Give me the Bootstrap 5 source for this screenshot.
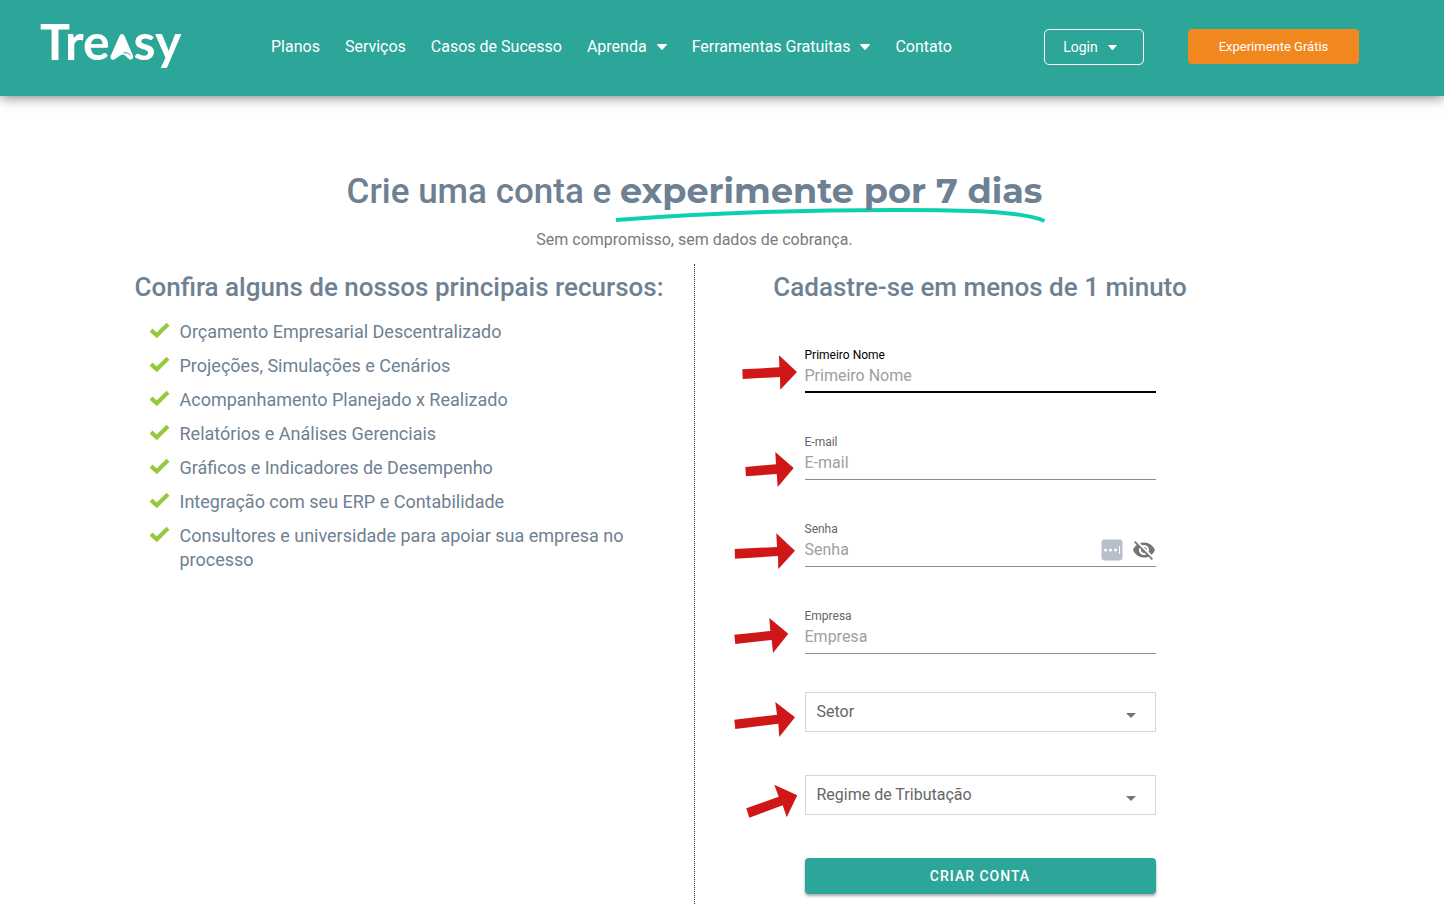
<!DOCTYPE html>
<html lang="pt-BR">
<head>
<meta charset="utf-8">
<meta name="viewport" content="width=device-width, initial-scale=1">
<title>Treasy - Crie uma conta</title>
<link href="https://cdn.jsdelivr.net/npm/bootstrap@5.3.0/dist/css/bootstrap.min.css" rel="stylesheet">
<style>
  :root { --teal: #2ca699; --slate: #6e8192; }
  body { font-family: Roboto, "Liberation Sans", sans-serif; color: #7a7a7a; background: #fff; }

  .site-header { min-height: 96px; padding: 0 85px 2px 40px; background: var(--teal); box-shadow: 0 1px 12px rgba(0, 0, 0, .55); }
  .brand { width: 139px; padding-bottom: 12px; font: 700 50px/60px Lato, "Liberation Sans", sans-serif; color: #fff; text-decoration: none; }
  .brand svg { width: 24px; height: 26px; }
  .main-menu { gap: 25px; margin-left: 92px; }
  .main-menu .nav-link { color: #fff; line-height: 24px; padding: 0; }
  .arrow-down { width: 10px; height: 6px; margin-left: 10px; fill: currentColor; vertical-align: 2px; }
  .header-actions { gap: 44px; }
  .btn-login { width: 100px; height: 36px; font-size: 14px; line-height: 20px; color: #fff; border: 1px solid #fff; border-radius: 5px; padding: 0 8px 0 0; }
  .btn-login .arrow-down { width: 9px; height: 5px; }
  .btn-trial { width: 171px; height: 35px; font-size: 13px; line-height: 20px; color: #fff; background: #f1881f; border: 0; border-radius: 4px; padding: 0; }
  .btn-login:hover, .btn-trial:hover { color: #fff; background: #e07a12; }

  main { padding: 74px 55px 0 0; }
  .page-title { font-size: 35px; line-height: 44px; font-weight: 500; color: var(--slate); }
  .highlighted { font-family: Montserrat, Inter, sans-serif; font-weight: 700; line-height: 36px; }
  .highlighted svg { left: -4px; bottom: -15px; width: calc(100% + 8px); height: 16px; z-index: -1; }
  .subtitle { margin-top: 14px; margin-bottom: 12px; line-height: 24px; }

  .signup-columns { max-width: 1140px; }
  .col-features { border-right: 1px dotted #333; padding: 7px 10px 10px; }
  .col-form { padding: 7px 9px 10px 10px; }
  h2 { font-size: 26px; line-height: 32px; font-weight: 500; color: var(--slate); }
  .features { gap: 10px; margin-top: 17px; padding: 0 40px 0 14px; font-size: 18px; line-height: 24px; color: var(--slate); }
  .features svg { width: 21px; height: 16px; margin: 2px 10px 0 0; }

  .signup-form { max-width: 351px; margin-top: 44px; }
  .text-fields { gap: 41px; }
  .choices { gap: 43px; margin-top: 38px; }
  .field label { font-size: 12px; line-height: 16px; color: #666; }
  .field input { display: block; width: 100%; height: 30px; padding: 0 0 5px; border: 0; border-bottom: 1px solid #8c8c8c; border-radius: 0; outline: 0; background: transparent; font-size: 16px; line-height: 24px; color: #222; }
  .field input::placeholder { color: #a0a0a0; opacity: 1; }
  .field.active label { color: #000; }
  .field.active input { border-bottom: 2px solid #000; padding-bottom: 4px; }
  .field-tools { right: 0; bottom: 5px; gap: 9px; }
  .field-tools button { padding: 0; border: 0; background: none; line-height: 0; }
  .pointer { right: 100%; top: 0; width: 80px; height: 46px; overflow: visible; fill: #cf1717; pointer-events: none; }
  .choice { display: block; width: 100%; height: 40px; padding: 0 36px 0 11px; border: 1px solid #d6d6d6; border-radius: 0; appearance: none; font-size: 16px; line-height: 24px; color: #666;
    background: #fff url("data:image/svg+xml,%3Csvg xmlns='http://www.w3.org/2000/svg' viewBox='0 0 10 5'%3E%3Cpath d='M0 0h10L5 5z' fill='%23757575'/%3E%3C/svg%3E") no-repeat right 19px top 20px / 10px 5px; }
  .btn-create { height: 36px; padding: 0; border: 0; border-radius: 4px; background: var(--teal); color: #fff; font-size: 14px; line-height: 20px; font-weight: 500; letter-spacing: 1px; box-shadow: 0 2px 3px rgba(0, 0, 0, .35); }
  .btn-create:hover { background: #24887d; color: #fff; }
</style>
</head>
<body>
<svg class="d-none" aria-hidden="true">
  <symbol id="caret" viewBox="0 0 10 6"><path d="M.8 0h8.400q1.200.2.5 1.100L5.700 5.600q-.7.7-1.400 0L.3 1.100Q-.4.2.8 0z"/></symbol>
  <symbol id="check" viewBox="0 0 21 16"><path d="M2 8.200l5.800 5.100L19 2.200" fill="none" stroke="#96c93d" stroke-width="4.200"/></symbol>
</svg>

<header class="site-header position-relative d-flex align-items-center">
  <a class="brand d-flex align-items-baseline" href="#" aria-label="Treasy">
    <span>Tre</span>
    <svg class="flex-shrink-0" viewBox="0 0 25 27" aria-hidden="true"><path d="M12.500 0q1.800 0 2.800 2.200L23.900 22.500q.8 2.200-.8 3.600-1.700 1.300-3.400 0l-4.600-4.300q-2-1.200-4 .2L5.300 26q-2 1.500-3.800.2-1.600-1.500-.7-3.700L9.700 2.200Q10.700 0 12.500 0z" fill="#fff"/><path d="M14 19.500q4.500-1 7.500 2.500" fill="none" stroke="#2ca699" stroke-width="1"/></svg>
    <span>sy</span>
  </a>
  <nav class="main-menu nav flex-nowrap" aria-label="Menu principal">
    <a class="nav-link" href="#">Planos</a>
    <a class="nav-link" href="#">Serviços</a>
    <a class="nav-link" href="#">Casos de Sucesso</a>
    <a class="nav-link" href="#">Aprenda<svg class="arrow-down"><use href="#caret"/></svg></a>
    <a class="nav-link" href="#">Ferramentas Gratuitas<svg class="arrow-down"><use href="#caret"/></svg></a>
    <a class="nav-link" href="#">Contato</a>
  </nav>
  <div class="header-actions d-flex ms-auto">
    <button type="button" class="btn btn-login">Login<svg class="arrow-down"><use href="#caret"/></svg></button>
    <button type="button" class="btn btn-trial">Experimente Grátis</button>
  </div>
</header>

<main>
  <div class="text-center">
    <h1 class="page-title mb-0">Crie uma conta e <span class="highlighted position-relative d-inline-block">experimente por 7 dias<svg class="position-absolute" viewBox="0 0 430 16" preserveAspectRatio="none" aria-hidden="true"><path d="M0 12C90 5 190 2 280 2 350 2 405 3 428 13" fill="none" stroke="#0bd1b0" stroke-width="4"/></svg></span></h1>
    <p class="subtitle">Sem compromisso, sem dados de cobrança.</p>
  </div>

  <div class="signup-columns row g-0 mx-auto">
    <section class="col-6 col-features">
      <h2 class="mb-0">Confira alguns de nossos principais recursos:</h2>
      <ul class="features list-unstyled d-flex flex-column mb-0">
        <li class="d-flex"><svg class="flex-shrink-0"><use href="#check"/></svg>Orçamento Empresarial Descentralizado</li>
        <li class="d-flex"><svg class="flex-shrink-0"><use href="#check"/></svg>Projeções, Simulações e Cenários</li>
        <li class="d-flex"><svg class="flex-shrink-0"><use href="#check"/></svg>Acompanhamento Planejado x Realizado</li>
        <li class="d-flex"><svg class="flex-shrink-0"><use href="#check"/></svg>Relatórios e Análises Gerenciais</li>
        <li class="d-flex"><svg class="flex-shrink-0"><use href="#check"/></svg>Gráficos e Indicadores de Desempenho</li>
        <li class="d-flex"><svg class="flex-shrink-0"><use href="#check"/></svg>Integração com seu ERP e Contabilidade</li>
        <li class="d-flex"><svg class="flex-shrink-0"><use href="#check"/></svg>Consultores e universidade para apoiar sua empresa no processo</li>
      </ul>
    </section>

    <section class="col-6 col-form">
      <h2 class="text-center mb-0">Cadastre-se em menos de 1 minuto</h2>
      <form class="signup-form mx-auto">
        <div class="text-fields d-flex flex-column">
          <div class="field active position-relative">
            <label class="d-block" for="nome">Primeiro Nome</label>
            <input type="text" id="nome" placeholder="Primeiro Nome">
            <svg class="pointer position-absolute" viewBox="0 0 80 46" aria-hidden="true"><path d="M17.300 22.300L17.700 32 55 30 55.300 42.700 72 25 54 8.300 54.300 20.300z"/></svg>
          </div>
          <div class="field position-relative">
            <label class="d-block" for="email">E-mail</label>
            <input type="email" id="email" placeholder="E-mail">
            <svg class="pointer position-absolute" viewBox="0 0 80 46" aria-hidden="true"><path d="M20.300 33L21 42.300 51.700 40 52.700 53 68.700 34 50.300 18 51 30.300z"/></svg>
          </div>
          <div class="field position-relative">
            <label class="d-block" for="senha">Senha</label>
            <input type="password" id="senha" placeholder="Senha">
            <div class="field-tools position-absolute d-flex align-items-center">
              <button type="button" aria-label="Gerar senha"><svg width="22" height="22" viewBox="0 0 22 22"><rect x=".5" y=".5" width="21" height="21" rx="3" fill="#b7bfcb"/><circle cx="4.500" cy="11" r="1.500" fill="#fff"/><circle cx="9.500" cy="11" r="1.500" fill="#fff"/><circle cx="14.500" cy="11" r="1.500" fill="#fff"/><path d="M18.500 7v8" stroke="#fff"/></svg></button>
              <button type="button" aria-label="Mostrar senha"><svg width="24" height="24" viewBox="0 0 24 24" fill="#757575"><path d="M12 7c2.760 0 5 2.240 5 5 0 .65-.13 1.260-.36 1.830l2.920 2.920c1.510-1.260 2.700-2.890 3.430-4.750-1.730-4.390-6-7.500-11-7.500-1.400 0-2.740.25-3.980.7l2.160 2.160C10.740 7.130 11.350 7 12 7zM2 4.270l2.280 2.280.46.46C3.080 8.300 1.780 10.020 1 12c1.730 4.390 6 7.500 11 7.500 1.550 0 3.030-.3 4.380-.84l.42.42L19.730 22 21 20.730 3.270 3 2 4.270zM7.530 9.800l1.550 1.550c-.05.21-.08.43-.08.65 0 1.660 1.340 3 3 3 .22 0 .44-.03.65-.08l1.550 1.550c-.67.33-1.410.53-2.200.53-2.760 0-5-2.240-5-5 0-.79.2-1.530.53-2.200zm4.310-.78l3.150 3.150.02-.16c0-1.660-1.340-3-3-3l-.17.01z"/></svg></button>
            </div>
            <svg class="pointer position-absolute" viewBox="0 0 80 46" aria-hidden="true"><path d="M9.700 28L10 37.700 53 35 53.300 48 70 29.700 51.300 12.300 52 26z"/></svg>
          </div>
          <div class="field position-relative">
            <label class="d-block" for="empresa">Empresa</label>
            <input type="text" id="empresa" placeholder="Empresa">
            <svg class="pointer position-absolute" viewBox="0 0 80 46" aria-hidden="true"><path d="M9.300 26.700L10.300 36 46.700 32 48 45 63.300 25.700 44.300 10 45.300 23z"/></svg>
          </div>
        </div>
        <div class="choices d-flex flex-column">
          <div class="position-relative">
            <select class="choice" id="setor" aria-label="Setor"><option>Setor</option></select>
            <svg class="pointer position-absolute" viewBox="0 0 80 46" aria-hidden="true"><path d="M9.300 27.700L10.300 37 53.300 31.700 54.300 45 70 25.300 50.300 10 52 22.700z"/></svg>
          </div>
          <div class="position-relative">
            <select class="choice" id="regime" aria-label="Regime de Tributação"><option>Regime de Tributação</option></select>
            <svg class="pointer position-absolute" viewBox="0 0 80 46" aria-hidden="true"><path d="M21.300 33.300L24.300 42.700 57.700 30.300 61.700 42.300 72.300 20.300 49.300 9.700 53.700 21.700z"/></svg>
          </div>
          <button type="submit" class="btn btn-create w-100">CRIAR CONTA</button>
        </div>
      </form>
    </section>
  </div>
</main>
<script src="https://cdn.jsdelivr.net/npm/bootstrap@5.3.0/dist/js/bootstrap.bundle.min.js"></script>
</body>
</html>
